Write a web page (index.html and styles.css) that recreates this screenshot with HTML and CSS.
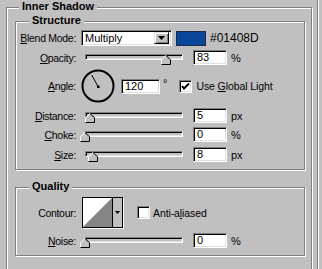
FILE: index.html
```html
<!DOCTYPE html>
<html>
<head>
<meta charset="utf-8">
<link rel="stylesheet" href="styles.css">
</head>
<body>
<div class="group outer">
  <div class="title t-outer">Inner Shadow</div>
  <div class="group structure">
    <div class="title t-sub">Structure</div>
    <div class="row r-blend">
      <span class="lbl"><u>B</u>lend Mode:</span>
      <div class="select">
        <span class="select-val">Multiply</span>
        <span class="drop"><svg width="7" height="4" viewBox="0 0 7 4"><polygon points="0,0 7,0 3.5,4" fill="#000"/></svg></span>
      </div>
      <span class="swatch"></span>
      <span class="hex">#01408D</span>
    </div>
    <div class="row r-opacity">
      <span class="lbl"><u>O</u>pacity:</span>
      <div class="slider"><div class="track"></div><svg class="thumb" style="left:80px" width="10" height="10" viewBox="0 0 10 10"><polygon points="0,4.5 5,0 10,4.5 10,10 0,10" fill="#c0c0c0"/><polyline points="0.5,9.5 0.5,4.7 5,0.7" stroke="#fff" fill="none"/><polyline points="5,0.7 9.5,4.7 9.5,9.5 0.5,9.5" stroke="#000" fill="none"/></svg></div>
      <div class="field">83</div><span class="unit">%</span>
    </div>
    <div class="row r-angle">
      <span class="lbl"><u>A</u>ngle:</span>
      <svg class="dial" width="34" height="34" viewBox="0 0 34 34"><circle cx="17" cy="17" r="15.5" fill="none" stroke="#000" stroke-width="2"/><line x1="17" y1="17.5" x2="10.7" y2="6" stroke="#000" stroke-width="1"/><rect x="16" y="16.5" width="2.5" height="2.5" fill="#000"/></svg>
      <div class="field f-angle">120</div><span class="unit deg">°</span>
      <span class="check"><svg width="9" height="9" viewBox="0 0 9 9"><polyline points="1,4 3,6.5 8,1.5" stroke="#000" stroke-width="2" fill="none"/></svg></span>
      <span class="check-lbl">Use <u>G</u>lobal Light</span>
    </div>
    <div class="row r-distance">
      <span class="lbl"><u>D</u>istance:</span>
      <div class="slider"><div class="track"></div><svg class="thumb" style="left:4px" width="10" height="10" viewBox="0 0 10 10"><polygon points="0,4.5 5,0 10,4.5 10,10 0,10" fill="#c0c0c0"/><polyline points="0.5,9.5 0.5,4.7 5,0.7" stroke="#fff" fill="none"/><polyline points="5,0.7 9.5,4.7 9.5,9.5 0.5,9.5" stroke="#000" fill="none"/></svg></div>
      <div class="field">5</div><span class="unit">px</span>
    </div>
    <div class="row r-choke">
      <span class="lbl"><u>C</u>hoke:</span>
      <div class="slider"><div class="track"></div><svg class="thumb" style="left:-1px" width="10" height="10" viewBox="0 0 10 10"><polygon points="0,4.5 5,0 10,4.5 10,10 0,10" fill="#c0c0c0"/><polyline points="0.5,9.5 0.5,4.7 5,0.7" stroke="#fff" fill="none"/><polyline points="5,0.7 9.5,4.7 9.5,9.5 0.5,9.5" stroke="#000" fill="none"/></svg></div>
      <div class="field">0</div><span class="unit">%</span>
    </div>
    <div class="row r-size">
      <span class="lbl"><u>S</u>ize:</span>
      <div class="slider"><div class="track"></div><svg class="thumb" style="left:7px" width="10" height="10" viewBox="0 0 10 10"><polygon points="0,4.5 5,0 10,4.5 10,10 0,10" fill="#c0c0c0"/><polyline points="0.5,9.5 0.5,4.7 5,0.7" stroke="#fff" fill="none"/><polyline points="5,0.7 9.5,4.7 9.5,9.5 0.5,9.5" stroke="#000" fill="none"/></svg></div>
      <div class="field">8</div><span class="unit">px</span>
    </div>
  </div>
  <div class="group quality">
    <div class="title t-sub">Quality</div>
    <div class="row r-contour">
      <span class="lbl">Contour:</span>
      <div class="contour">
        <svg class="contour-preview" width="29" height="29" viewBox="0 0 29 29"><polygon points="0,0 29,0 0,29" fill="#fff"/><polygon points="29,0 29,29 0,29" fill="#858585"/></svg>
        <span class="contour-btn"><svg width="5" height="3" viewBox="0 0 5 3"><polygon points="0,0 5,0 2.5,3" fill="#000"/></svg></span>
      </div>
      <span class="check unchecked"></span>
      <span class="check-lbl">Anti-a<u>l</u>iased</span>
    </div>
    <div class="row r-noise">
      <span class="lbl"><u>N</u>oise:</span>
      <div class="slider"><div class="track"></div><svg class="thumb" style="left:-1px" width="10" height="10" viewBox="0 0 10 10"><polygon points="0,4.5 5,0 10,4.5 10,10 0,10" fill="#c0c0c0"/><polyline points="0.5,9.5 0.5,4.7 5,0.7" stroke="#fff" fill="none"/><polyline points="5,0.7 9.5,4.7 9.5,9.5 0.5,9.5" stroke="#000" fill="none"/></svg></div>
      <div class="field">0</div><span class="unit">%</span>
    </div>
  </div>
</div>
<div class="separator"></div>
</body>
</html>
```

FILE: styles.css
```css
html, body {
  margin: 0;
  padding: 0;
  background: #c0c0c0;
  overflow: hidden;
  font-family: "Liberation Sans", Arial, sans-serif;
  font-size: 11px;
  color: #000;
}

body {
  padding: 7px 0 0 6px;
  height: 269px;
  box-sizing: border-box;
  display: flex;
  align-items: flex-start;
}

.separator {
  flex: none;
  margin-left: 5px;
  margin-top: -7px;
  width: 1px;
  height: 269px;
  background: #808080;
  box-shadow: 1px 0 0 #fff;
}

.group {
  position: relative;
  box-sizing: border-box;
  border: 1px solid #808080;
  box-shadow: inset 1px 1px 0 #fff, 1px 1px 0 #fff;
}

.outer {
  flex: none;
  width: 306px;
  padding: 0 6px 20px 8px;
}

.title {
  position: absolute;
  top: -8px;
  padding: 0 3px;
  height: 13px;
  line-height: 13px;
  background: #c0c0c0;
  font-weight: bold;
  font-size: 11px;
  white-space: nowrap;
}

.t-outer { left: 12px; }
.t-sub { left: 13px; }

.structure {
  margin-top: 13px;
  width: 290px;
  padding: 8px 0 7px 0;
  display: flex;
  flex-direction: column;
}

.quality {
  margin-top: 17px;
  width: 290px;
  padding: 9px 0 7px 0;
  display: flex;
  flex-direction: column;
}

.row {
  display: flex;
  align-items: center;
  height: 15px;
}

.r-blend { height: 16px; }
.r-opacity { margin-top: 4px; }
.r-angle { margin-top: 4px; height: 34px; }
.r-distance { margin-top: 5px; }
.r-choke { margin-top: 4px; }
.r-size { margin-top: 5px; }
.r-contour { height: 31px; }
.r-noise { margin-top: 5px; }

.lbl {
  width: 60px;
  flex: none;
  text-align: right;
  white-space: nowrap;
  font-size: 10.5px;
  letter-spacing: -0.3px;
}

.select {
  margin-left: 5px;
  width: 91px;
  height: 16px;
  box-sizing: border-box;
  background: #fff;
  border: 1px solid;
  border-color: #808080 #fff #fff #808080;
  box-shadow: inset 1px 1px 0 #000, inset -1px -1px 0 #dfdfdf;
  display: flex;
  align-items: center;
  padding: 2px 2px 2px 3px;
}

.select-val {
  flex: 1;
  line-height: 12px;
}

.drop {
  width: 15px;
  height: 12px;
  box-sizing: border-box;
  background: #c0c0c0;
  border: 1px solid;
  border-color: #dfdfdf #000 #000 #dfdfdf;
  box-shadow: inset 1px 1px 0 #fff, inset -1px -1px 0 #808080;
  display: flex;
  align-items: center;
  justify-content: center;
}

.drop svg { display: block; }

.swatch {
  margin-left: 4px;
  width: 30px;
  height: 15px;
  box-sizing: border-box;
  background: #0a4699;
  border: 1px solid #1e2a48;
}

.hex {
  margin-left: 4px;
  font-size: 12px;
}

.slider {
  position: relative;
  margin-left: 5px;
  width: 106px;
  height: 15px;
  flex: none;
}

.track {
  margin: 4px 4px 0 4px;
  height: 6px;
  box-sizing: border-box;
  border: 1px solid;
  border-color: #808080 #fff #fff #808080;
  box-shadow: inset 1px 1px 0 #000, inset -1px -1px 0 #dfdfdf;
  background: #c0c0c0;
}

.thumb {
  position: absolute;
  top: 5px;
  display: block;
}

.field {
  margin-left: 6px;
  width: 34px;
  height: 15px;
  box-sizing: border-box;
  flex: none;
  background: #fff;
  border: 1px solid;
  border-color: #808080 #fff #fff #808080;
  box-shadow: inset 1px 1px 0 #000, inset -1px -1px 0 #dfdfdf;
  padding: 0 0 0 3px;
  line-height: 13px;
}

.f-angle {
  width: 39px;
}

.unit {
  margin-left: 4px;
}

.deg {
  margin-left: 3px;
  align-self: flex-start;
  margin-top: 8px;
}

.dial {
  margin-left: 5px;
  flex: none;
  display: block;
}

.check {
  margin-left: 12px;
  width: 13px;
  height: 13px;
  box-sizing: border-box;
  flex: none;
  background: #fff;
  border: 1px solid;
  border-color: #808080 #fff #fff #808080;
  box-shadow: inset 1px 1px 0 #000, inset -1px -1px 0 #dfdfdf;
  display: flex;
  align-items: center;
  justify-content: center;
}

.check svg { display: block; }

.check-lbl {
  margin-left: 4px;
  white-space: nowrap;
  font-size: 10.5px;
  letter-spacing: -0.1px;
}

.contour {
  margin-left: 6px;
  width: 41px;
  height: 31px;
  box-sizing: border-box;
  flex: none;
  border: 1px solid #000;
  box-shadow: 1px 1px 0 #fff;
  display: flex;
}

.contour-preview {
  display: block;
}

.contour-btn {
  flex: 1;
  background: #c0c0c0;
  border-left: 1px solid #000;
  display: flex;
  align-items: center;
  justify-content: center;
}

.contour-btn svg { display: block; }

.unchecked {
  margin-left: 14px;
}

.r-contour .check-lbl { margin-left: 3px; }
```
